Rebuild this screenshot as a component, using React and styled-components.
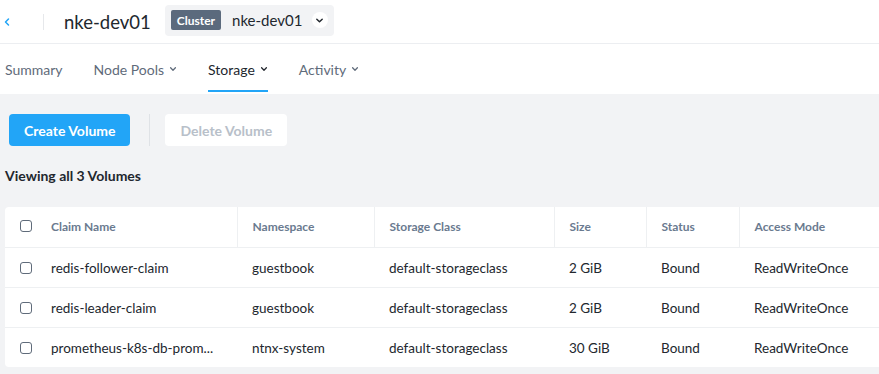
import React from 'react';
import styled, { createGlobalStyle } from 'styled-components';

const GlobalStyle = createGlobalStyle`
  body {
    margin: 0;
    background: #f2f3f5;
    font-family: Lato, "Open Sans", sans-serif;
    color: #22272e;
  }
`;

const Header = styled.header`
  height: 43px;
  display: flex;
  align-items: center;
  background: #fff;
  border-bottom: 1px solid #eceef1;
`;

const BackButton = styled.button`
  width: 44px;
  height: 16px;
  border: none;
  border-right: 1px solid #e6e8eb;
  background: none;
  padding: 0 0 0 2px;
  display: flex;
  align-items: center;
  justify-content: flex-start;
  color: #22a5f7;
  cursor: pointer;
`;

const Title = styled.h1`
  margin: 0 0 0 20px;
  font-size: 18.5px;
  font-weight: 400;
  color: #22272e;
`;

const ClusterSelect = styled.div`
  margin-left: 14px;
  height: 31px;
  width: 169px;
  box-sizing: border-box;
  padding: 0 6px;
  background: #f2f3f5;
  border-radius: 4px;
  display: flex;
  align-items: center;
  margin-top: -3px;
`;

const Badge = styled.span`
  background: #5b6a7d;
  color: #fff;
  font-size: 12px;
  font-weight: 700;
  height: 20px;
  padding: 0 6px;
  display: flex;
  align-items: center;
  border-radius: 2px;
`;

const ClusterName = styled.span`
  margin-left: 11px;
  font-size: 15px;
  flex: 1;
`;

const CaretCircle = styled.span`
  width: 16px;
  height: 16px;
  border-radius: 50%;
  background: #fff;
  display: flex;
  align-items: center;
  justify-content: center;
`;

const Tabs = styled.nav`
  height: 50px;
  background: #fff;
  display: flex;
  align-items: stretch;
  padding-left: 5px;
  gap: 31px;
`;

const Tab = styled.div`
  position: relative;
  display: flex;
  align-items: center;
  gap: 5px;
  font-size: 14px;
  color: ${p => (p.$active ? '#22272e' : '#5f6b7a')};
  ${p => p.$active && `
    &::after {
      content: '';
      position: absolute;
      left: 0;
      right: 0;
      bottom: 2px;
      height: 2px;
      background: #22a5f7;
    }
  `}
`;

const Content = styled.main`
  padding: 20px 0 0 5px;
`;

const Toolbar = styled.div`
  display: flex;
  align-items: center;
  padding-left: 4px;
`;

const Button = styled.button`
  height: 32px;
  padding: 0 15px;
  border: none;
  border-radius: 4px;
  font-family: inherit;
  font-size: 14px;
  font-weight: 700;
  background: ${p => (p.$primary ? '#22a5f7' : '#fff')};
  color: ${p => (p.$primary ? '#fff' : '#b8c0c9')};
`;

const Separator = styled.span`
  width: 1px;
  height: 32px;
  background: #dfe2e6;
  margin: 0 15px 0 19px;
`;

const Count = styled.div`
  margin-top: 21px;
  font-size: 14px;
  font-weight: 700;
`;

const Table = styled.table`
  margin-top: 23px;
  width: calc(100% + 20px);
  border-collapse: collapse;
  background: #fff;
  border-radius: 4px;
  table-layout: fixed;
`;

const Th = styled.th`
  height: 38px;
  text-align: left;
  font-size: 12px;
  font-weight: 700;
  color: #6a7a8f;
  padding: 0 0 2px 15px;
  border-left: 1px solid #eef0f2;
  border-bottom: 1px solid #eef0f2;
  &:first-child { border-left: none; }
`;

const Td = styled.td`
  height: 39px;
  font-size: 13.5px;
  padding: 0 0 0 15px;
  border-bottom: 1px solid #eef0f2;
  white-space: nowrap;
  overflow: hidden;
  tr:last-child & { border-bottom: none; }
`;

const CheckCell = styled.div`
  display: flex;
  align-items: center;
  gap: 19px;
`;

const Checkbox = styled.span`
  width: 10px;
  height: 10px;
  flex: none;
  border: 1.3px solid #5f6b7a;
  border-radius: 3px;
`;

const Chevron = ({ size = 8, color = '#5f6b7a' }) => (
  <svg width={size} height={size} viewBox="0 0 10 10" fill="none">
    <path d="M2 3.5 L5 6.5 L8 3.5" stroke={color} strokeWidth="1.6" strokeLinecap="round" strokeLinejoin="round" />
  </svg>
);

const volumes = [
  { name: 'redis-follower-claim', ns: 'guestbook', sc: 'default-storageclass', size: '2 GiB', status: 'Bound', mode: 'ReadWriteOnce' },
  { name: 'redis-leader-claim', ns: 'guestbook', sc: 'default-storageclass', size: '2 GiB', status: 'Bound', mode: 'ReadWriteOnce' },
  { name: 'prometheus-k8s-db-prom...', ns: 'ntnx-system', sc: 'default-storageclass', size: '30 GiB', status: 'Bound', mode: 'ReadWriteOnce' },
];

export default function App() {
  return (
    <>
      <GlobalStyle />
      <Header>
        <BackButton aria-label="Back">
          <svg width="10" height="10" viewBox="0 0 10 10" fill="none">
            <path d="M6.5 2 L3.5 5 L6.5 8" stroke="#22a5f7" strokeWidth="1.5" strokeLinecap="round" strokeLinejoin="round" />
          </svg>
        </BackButton>
        <Title>nke-dev01</Title>
        <ClusterSelect>
          <Badge>Cluster</Badge>
          <ClusterName>nke-dev01</ClusterName>
          <CaretCircle><Chevron size={9} color="#22272e" /></CaretCircle>
        </ClusterSelect>
      </Header>
      <Tabs>
        <Tab>Summary</Tab>
        <Tab>Node Pools <Chevron /></Tab>
        <Tab $active>Storage <Chevron color="#22272e" /></Tab>
        <Tab>Activity <Chevron /></Tab>
      </Tabs>
      <Content>
        <Toolbar>
          <Button $primary>Create Volume</Button>
          <Separator />
          <Button>Delete Volume</Button>
        </Toolbar>
        <Count>Viewing all 3 Volumes</Count>
        <Table>
          <colgroup>
            <col style={{ width: 232 }} />
            <col style={{ width: 137 }} />
            <col style={{ width: 180 }} />
            <col style={{ width: 92 }} />
            <col style={{ width: 93 }} />
            <col />
          </colgroup>
          <thead>
            <tr>
              <Th><CheckCell><Checkbox />Claim Name</CheckCell></Th>
              <Th>Namespace</Th>
              <Th>Storage Class</Th>
              <Th>Size</Th>
              <Th>Status</Th>
              <Th>Access Mode</Th>
            </tr>
          </thead>
          <tbody>
            {volumes.map(v => (
              <tr key={v.name}>
                <Td><CheckCell><Checkbox />{v.name}</CheckCell></Td>
                <Td>{v.ns}</Td>
                <Td>{v.sc}</Td>
                <Td>{v.size}</Td>
                <Td>{v.status}</Td>
                <Td>{v.mode}</Td>
              </tr>
            ))}
          </tbody>
        </Table>
      </Content>
    </>
  );
}
